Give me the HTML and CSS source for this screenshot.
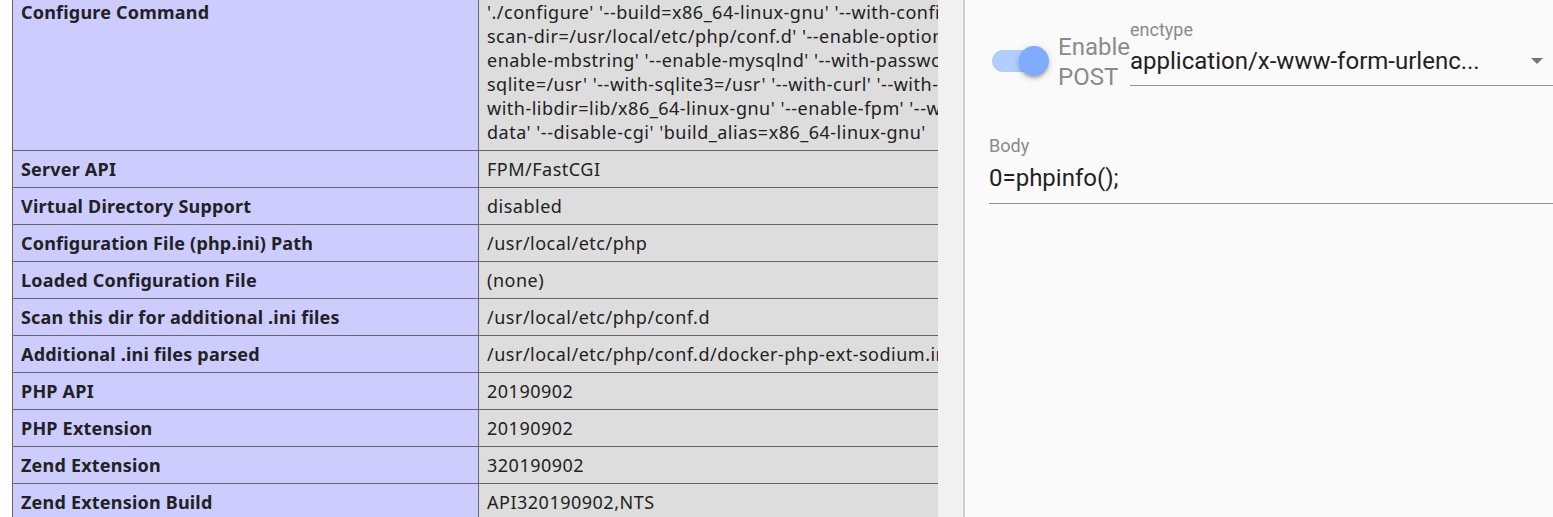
FILE: index.html
```html
<!DOCTYPE html>
<html>
<head>
<meta charset="utf-8">
<link rel="stylesheet" href="styles.css">
</head>
<body>
<div class="app">
  <div class="info-pane">
    <div class="info-scroll">
      <table class="phpinfo">
        <colgroup><col class="col-e"><col class="col-v"></colgroup>
        <tr><td class="e">Configure Command</td><td class="v">'./configure' '--build=x86_64-linux-gnu' '--with-config-file-path=/usr/local/etc/php' '--with-config-file-<br>scan-dir=/usr/local/etc/php/conf.d' '--enable-option-checking=fatal' '--with-mhash' '--enable-ftp' '--<br>enable-mbstring' '--enable-mysqlnd' '--with-password-argon2' '--with-sodium=shared' '--with-pdo-<br>sqlite=/usr' '--with-sqlite3=/usr' '--with-curl' '--with-libedit' '--with-openssl' '--with-zlib' '--<br>with-libdir=lib/x86_64-linux-gnu' '--enable-fpm' '--with-fpm-user=www-data' '--with-fpm-group=www-<br>data' '--disable-cgi' 'build_alias=x86_64-linux-gnu'</td></tr>
        <tr><td class="e">Server API</td><td class="v">FPM/FastCGI</td></tr>
        <tr><td class="e">Virtual Directory Support</td><td class="v">disabled</td></tr>
        <tr><td class="e">Configuration File (php.ini) Path</td><td class="v">/usr/local/etc/php</td></tr>
        <tr><td class="e">Loaded Configuration File</td><td class="v">(none)</td></tr>
        <tr><td class="e">Scan this dir for additional .ini files</td><td class="v">/usr/local/etc/php/conf.d</td></tr>
        <tr><td class="e">Additional .ini files parsed</td><td class="v">/usr/local/etc/php/conf.d/docker-php-ext-sodium.ini</td></tr>
        <tr><td class="e">PHP API</td><td class="v">20190902</td></tr>
        <tr><td class="e">PHP Extension</td><td class="v">20190902</td></tr>
        <tr><td class="e">Zend Extension</td><td class="v">320190902</td></tr>
        <tr><td class="e">Zend Extension Build</td><td class="v">API320190902,NTS</td></tr>
        <tr><td class="e">PHP Extension Build</td><td class="v">API20190902,NTS</td></tr>
      </table>
    </div>
    <div class="scrollbar"></div>
  </div>
  <div class="divider"></div>
  <div class="request-pane">
    <div class="post-row">
      <div class="switch">
        <div class="switch-track"></div>
        <div class="switch-thumb"></div>
      </div>
      <div class="switch-label">Enable<br>POST</div>
      <div class="field select-field">
        <div class="field-label">enctype</div>
        <div class="field-input">
          <span class="field-value">application/x-www-form-urlenc...</span>
          <span class="arrow"></span>
        </div>
      </div>
    </div>
    <div class="field body-field">
      <div class="field-label">Body</div>
      <div class="field-input">
        <span class="field-value">0=phpinfo();</span>
      </div>
    </div>
  </div>
</div>
</body>
</html>
```
FILE: styles.css
```css
html, body {
  margin: 0;
  padding: 0;
  background: #ffffff;
  overflow: hidden;
}

.app {
  display: flex;
  height: 517px;
  overflow: hidden;
}

.info-pane {
  display: flex;
  flex: none;
  width: 963px;
}

.info-scroll {
  flex: none;
  width: 926px;
  padding-left: 12px;
  overflow: hidden;
  background: #ffffff;
}

.phpinfo {
  border-collapse: collapse;
  table-layout: fixed;
  width: 1401px;
  margin-top: -7px;
  font-family: "Noto Sans", "Open Sans", sans-serif;
  font-size: 18px;
  line-height: 24px;
  color: #222222;
}

.col-e {
  width: 466px;
}

.phpinfo td {
  border: 1px solid #666666;
  padding: 6px 7px 6px 8px;
  vertical-align: baseline;
  white-space: nowrap;
}

.phpinfo td.e {
  background: #ccccff;
  font-weight: bold;
  letter-spacing: 0.2px;
}

.phpinfo td.v {
  background: #dddddd;
  letter-spacing: 0.5px;
}

.scrollbar {
  flex: none;
  width: 25px;
  background: #f1f1f1;
}

.divider {
  flex: none;
  width: 2px;
  background: #cdcdcd;
}

.request-pane {
  flex: 1;
  min-width: 0;
  background: #fafafa;
  padding-left: 24px;
  overflow: hidden;
  font-family: Roboto, sans-serif;
}

.post-row {
  display: flex;
  align-items: flex-start;
  padding-top: 20px;
}

.switch {
  position: relative;
  flex: none;
  width: 57px;
  height: 30px;
  margin-top: 26px;
  margin-left: 3px;
}

.switch-track {
  position: absolute;
  left: 0;
  top: 4px;
  width: 52px;
  height: 22px;
  border-radius: 11px;
  background: #b2ceff;
}

.switch-thumb {
  position: absolute;
  left: 27px;
  top: 0;
  width: 30px;
  height: 30px;
  border-radius: 50%;
  background: #80acff;
  box-shadow: 0 3px 3px -2px rgba(0,0,0,0.2), 0 3px 4px 0 rgba(0,0,0,0.14), 0 1px 8px 0 rgba(0,0,0,0.12);
}

.switch-label {
  flex: none;
  margin-top: 12px;
  margin-left: 9px;
  font-size: 24px;
  line-height: 30px;
  color: #8a8a8a;
}

.field {
  display: flex;
  flex-direction: column;
}

.select-field {
  flex: 1;
  margin-left: 0;
}

.field-label {
  font-size: 18px;
  line-height: 20px;
  color: #8a8a8a;
}

.field-input {
  display: flex;
  align-items: center;
  border-bottom: 1px solid #949494;
  padding: 5px 0 8px 0;
}

.field-value {
  flex: 1;
  font-size: 24px;
  line-height: 32px;
  color: #222222;
  white-space: nowrap;
}

.arrow {
  flex: none;
  width: 0;
  height: 0;
  margin-right: 10px;
  border-left: 6px solid transparent;
  border-right: 6px solid transparent;
  border-top: 6px solid #757575;
}

.body-field {
  margin-top: 44px;
}

.body-field .field-input {
  padding-top: 6px;
  padding-bottom: 9px;
}
```
